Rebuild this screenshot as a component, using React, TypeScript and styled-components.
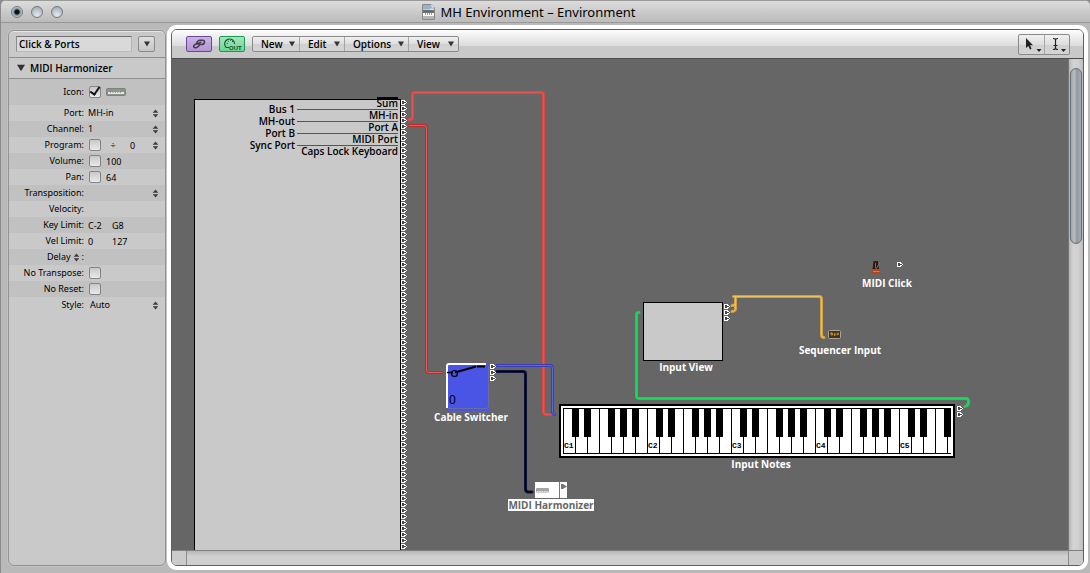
import React from "react";
import styled, { createGlobalStyle } from "styled-components";

const GlobalStyle = createGlobalStyle`
  * { box-sizing: border-box; }
  html, body { margin: 0; padding: 0; background: #8a8a8a; }
  body, button, input, select {
    font-family: "Noto Sans", "Open Sans", sans-serif;
    font-size: 10px;
    line-height: 12px;
    color: #000;
  }
`;

const strong = `
  font-family: "Open Sans", "Noto Sans", sans-serif;
  font-weight: 600;
`;

const Window = styled.div`
  display: flex;
  flex-direction: column;
  min-height: 100vh;
  background: #b9b9b9;
  border-left: 1px solid #8c8c8c;
  border-radius: 6px 6px 0 0;
  overflow: hidden;
`;

const TitleBar = styled.header`
  position: relative;
  display: flex;
  align-items: center;
  justify-content: center;
  gap: 6px;
  height: 23px;
  padding-right: 34px;
  border-top: 1px solid #9a9a9a;
  border-bottom: 1px solid #989898;
  background: linear-gradient(#dcdcdc, #bbbbbb);
`;

const Title = styled.h1`
  margin: 0;
  font-size: 13px;
  line-height: 18px;
  font-weight: 400;
`;

const Lights = styled.div`
  position: absolute;
  left: 10px;
  top: 5px;
  display: flex;
  gap: 8px;
`;

const Light = styled.button<{ $dot?: boolean }>`
  width: 12px;
  height: 12px;
  padding: 0;
  border: 1px solid #727a82;
  border-radius: 50%;
  background: ${(p) =>
    p.$dot
      ? "radial-gradient(circle at 50% 50%, #111 0 2px, #77818c 3px, #c5ced6 5px)"
      : "radial-gradient(circle at 50% 80%, #e4ebf0, #98a3ad)"};
`;

const Body = styled.main`
  flex: 1;
  display: flex;
  gap: 1px;
  padding: 2px 2px 3px 7px;
`;

const Sidebar = styled.aside`
  flex: none;
  width: 158px;
  margin: 5px 0 4px;
  border: 1px solid #939393;
  border-radius: 6px;
  background: #c9c9c9;
  box-shadow: inset 0 1px #e6e6e6, 0 0 0 1px #c2c2c2;
`;

const LayerBar = styled.div`
  display: flex;
  align-items: center;
  justify-content: space-between;
  height: 27px;
  padding: 0 10px 0 7px;
  border-bottom: 1px solid #8f8f8f;
`;

const LayerInput = styled.input`
  width: 116px;
  height: 16px;
  padding: 0 2px;
  border: 1px solid;
  border-color: #6f6f6f #b5b5b5 #bcbcbc #8c8c8c;
  background: #d9d9d9;
  outline: none;
  ${strong}
`;

const LayerButton = styled.button`
  display: grid;
  place-items: center;
  width: 17px;
  height: 16px;
  padding: 0;
  border: 1px solid #8a8a8a;
  border-radius: 2px;
  background: linear-gradient(#dedede, #c6c6c6);
`;

const SectionTitle = styled.button`
  display: flex;
  align-items: center;
  gap: 5px;
  width: 100%;
  height: 21px;
  padding: 0 8px;
  border: 0;
  border-bottom: 1px solid #8f8f8f;
  background: none;
  ${strong}
`;

const Row = styled.div<{ $shade?: boolean; $tall?: boolean }>`
  display: flex;
  align-items: center;
  gap: 4px;
  height: ${(p) => (p.$tall ? 26 : 16)}px;
  padding-right: 6px;
  background: ${(p) => (p.$shade ? "#c1c1c1" : "#c9c9c9")};
  font-size: 9px;
`;

const RowLabel = styled.label`
  display: flex;
  align-items: center;
  justify-content: flex-end;
  gap: 2px;
  flex: none;
  width: 75px;
  white-space: nowrap;
`;

const Select = styled.select<{ $inset?: boolean }>`
  flex: 1;
  min-width: 0;
  height: 14px;
  padding: 0 0 0 ${(p) => (p.$inset ? 2 : 0)}px;
  border: 0;
  appearance: none;
  background: none;
  font-size: 9px;
`;

const Field = styled.input<{ $w?: number }>`
  flex: none;
  width: ${(p) => p.$w ?? 50}px;
  height: 14px;
  padding: 0;
  border: 0;
  background: none;
  font-size: 9px;
  outline: none;
`;

const Spacer = styled.span`
  flex: 1;
`;

const Sign = styled.span`
  flex: none;
  width: 14px;
  margin-right: 6px;
  text-align: center;
`;

const Check = styled.input.attrs({ type: "checkbox" })`
  appearance: none;
  display: grid;
  place-items: center;
  flex: none;
  width: 12px;
  height: 12px;
  margin: 0 1px;
  border: 1px solid #858585;
  border-radius: 2px;
  background: linear-gradient(#c8c8c8, #e9e9e9);
  &:checked::after {
    content: "";
    width: 4px;
    height: 8px;
    border: solid #111;
    border-width: 0 2px 2px 0;
    transform: translateY(-2px) rotate(35deg);
  }
`;

const Frame = styled.section`
  flex: 1;
  min-width: 0;
  display: flex;
  border: 4px solid #fff;
  border-radius: 9px;
  background: #fff;
`;

const Pane = styled.div`
  flex: 1;
  min-width: 0;
  display: flex;
  flex-direction: column;
  border: 1px solid #5f5f5f;
  border-radius: 6px;
  overflow: hidden;
`;

const Toolbar = styled.div`
  display: flex;
  align-items: center;
  gap: 7px;
  height: 29px;
  padding: 0 13px 0 14px;
  border-bottom: 1px solid #4c4c4c;
  background: linear-gradient(#fdfdfd, #dcdcdc 56%, #c9c9c9 57%, #c9c9c9);
`;

const ModeButton = styled.button<{ $tone: "purple" | "green" }>`
  display: grid;
  place-items: center;
  width: 26px;
  height: 16px;
  padding: 0;
  border: 1px solid ${(p) => (p.$tone === "purple" ? "#6a46a0" : "#1a9a50")};
  border-radius: 2px;
  background: ${(p) =>
    p.$tone === "purple"
      ? "linear-gradient(#c9b4e2, #b296d4)"
      : "linear-gradient(#a5e6bd, #6bd594)"};
`;

const ButtonGroup = styled.div`
  display: flex;
  border: 1px solid #8a8a8a;
  border-radius: 2px;
  background: linear-gradient(#f0f0f0, #dedede 50%, #d0d0d0 51%, #d4d4d4);
`;

const MenuButton = styled.button<{ $w: number }>`
  display: flex;
  align-items: center;
  justify-content: space-between;
  width: ${(p) => p.$w}px;
  height: 14px;
  padding: 0 4px 0 8px;
  border: 0;
  background: none;
  ${strong}
  & + & { border-left: 1px solid #a5a5a5; }
`;

const ToolButton = styled.button`
  width: 25px;
  height: 19px;
  padding: 0;
  border: 0;
  background: none;
  & + & { border-left: 1px solid #a5a5a5; }
  svg { display: block; }
`;

const Work = styled.div`
  flex: 1;
  display: flex;
`;

const Canvas = styled.div`
  position: relative;
  flex: 1;
  min-width: 0;
  min-height: 480px;
  background: #666;
  overflow: hidden;
`;

const Cables = styled.svg`
  position: absolute;
  left: 0;
  top: 0;
  width: 100%;
  height: 100%;
`;

const Node = styled.div<{ $x: number; $y: number; $w: number }>`
  position: absolute;
  left: ${(p) => p.$x}px;
  top: ${(p) => p.$y}px;
  width: ${(p) => p.$w}px;
  display: flex;
  flex-direction: column;
  align-items: center;
  svg { display: block; }
`;

const NodeLabel = styled.span<{ $selected?: boolean }>`
  ${strong}
  font-weight: 700;
  font-size: 10px;
  line-height: 12px;
  white-space: nowrap;
  color: ${(p) => (p.$selected ? "#666" : "#fff")};
  background: ${(p) => (p.$selected ? "#fff" : "none")};
`;

const PortBox = styled.div`
  position: absolute;
  left: 22px;
  top: 40px;
  bottom: 0;
  display: grid;
  align-content: start;
  width: 207px;
  border: 1px solid #000;
  border-bottom: 0;
  padding-right: 2px;
  background: #c9c9c9;
  ${strong}
`;

const PortStack = styled.div<{ $offset: number }>`
  grid-area: 1 / 1;
  display: flex;
  flex-direction: column;
  align-items: flex-end;
  margin-top: ${(p) => p.$offset}px;
`;

const PortName = styled.span<{ $bar?: boolean }>`
  line-height: 12px;
  box-shadow: ${(p) => (p.$bar ? "inset 0 3px #000" : "none")};
`;

const InPort = styled.span`
  display: grid;
  grid-template-columns: 100px 1fr;
  align-items: center;
  gap: 2px;
  width: 100%;
  height: 12px;
  text-align: right;
  &::after { content: ""; height: 1px; background: #555; }
`;

const VTrack = styled.div`
  flex: none;
  width: 15px;
  padding: 9px 0 6px;
  border-left: 1px solid #777;
  background: linear-gradient(90deg, #b5b5b5, #d4d4d4 30%, #cfcfcf 70%, #bdbdbd);
`;

const VThumb = styled.div`
  height: 37%;
  margin: 0 1px;
  border: 1px solid #666c73;
  border-radius: 7px;
  background: linear-gradient(90deg, #a4a9ae, #b6babd 35%, #8f979f 60%, #a9afb5);
`;

const HTrack = styled.div`
  display: grid;
  grid-template-columns: 15px 1fr 15px;
  height: 15px;
  border-top: 1px solid #808080;
  background: linear-gradient(#b6b6b6, #d0d0d0 40%, #cfcfcf);
`;

const HCell = styled.div<{ $line?: "left" | "right" }>`
  border: 0 solid #8a8a8a;
  border-left-width: ${(p) => (p.$line === "left" ? 1 : 0)}px;
  border-right-width: ${(p) => (p.$line === "right" ? 1 : 0)}px;
  background: ${(p) => (p.$line ? "#cbcbcb" : "none")};
`;

const StepperIcon = styled.svg`
  flex: none;
`;

const Stepper = () => (
  <StepperIcon width="7" height="9" viewBox="0 0 7 9" fill="#3c3c3c">
    <path d="M3.5 0.5 6.3 3.7H0.7ZM3.5 8.5 6.3 5.3H0.7Z" />
  </StepperIcon>
);

const Caret = ({ size = 6 }: { size?: number }) => (
  <svg width={size} height={size} viewBox="0 0 6 6" fill="#333">
    <path d="M0 0.5H6L3 5.5Z" />
  </svg>
);

const Device = () => (
  <svg width="20" height="8" viewBox="0 0 20 8">
    <rect x="0.5" y="0.5" width="19" height="7" rx="1" fill="#8d928d" stroke="#808080" />
    <rect x="2" y="4" width="16" height="2" fill="#e6e6e6" />
    <path d="M4.5 4v1M7 4v1M9.500 4v1M12 4v1M14.500 4v1" stroke="#777" strokeWidth=".7" />
    <rect x="11" y="2" width="3" height="1" fill="#7fae7f" />
  </svg>
);

const Jack = ({ x, y }: { x: number; y: number }) => (
  <g shapeRendering="crispEdges">
    <path d={`M${x} ${y}h4v1h1v1h1v1h-1v1h-1v1h-4z`} fill="#fff" />
    <path d={`M${x + 1} ${y + 1}h2v1h2v1h-2v1h-2z`} fill="#484848" />
  </g>
);

const Cable = ({ d, edge, core }: { d: string; edge: string; core: string }) => (
  <g fill="none" strokeLinejoin="round" strokeLinecap="round">
    <path d={d} stroke={edge} strokeWidth="3" />
    <path d={d} stroke={core} strokeWidth="1" />
  </g>
);

const whiteKeys = Array.from({ length: 33 }, (_, i) => i);
const blackKeys = whiteKeys.filter((i) => [0, 1, 3, 4, 5].includes(i % 7) && i < 32);

const Keyboard = () => (
  <svg width="404" height="54" viewBox="0 0 404 54" shapeRendering="crispEdges">
    <rect width="396" height="54" fill="#000" />
    <rect x="2" y="2" width="392" height="50" fill="#fff" />
    <rect x="4" y="4" width="388" height="1" />
    <rect x="4" y="49" width="388" height="1" />
    {whiteKeys.map((i) => (
      <rect key={i} x={4 + i * 12} y="4" width="1" height="46" />
    ))}
    {blackKeys.map((i) => (
      <rect key={i} x={13 + i * 12} y="4" width="7" height="29" />
    ))}
    {[1, 2, 3, 4, 5].map((n) => (
      <text
        key={n}
        x={5 + (n - 1) * 84}
        y="44"
        fontFamily="Liberation Mono, monospace"
        fontSize="8"
        fontWeight="700"
      >
        {"C" + n}
      </text>
    ))}
  </svg>
);

const inPorts = ["Bus 1", "MH-out", "Port B", "Sync Port"];
const outPorts = ["Sum", "MH-in", "Port A", "MIDI Port", "Caps Lock Keyboard"];

export default function App() {
  return (
    <>
      <GlobalStyle />
      <Window>
        <TitleBar>
          <Lights>
            <Light $dot aria-label="Close" />
            <Light aria-label="Minimize" />
            <Light aria-label="Zoom" />
          </Lights>
          <svg width="13" height="16" viewBox="0 0 13 16">
            <path d="M0.500 0.500H9L12.500 4V15.500H0.500Z" fill="#e4e6e8" stroke="#888" />
            <path d="M1 1H8.500V5.500H1Z" fill="#8fb4cc" />
            <path d="M9 0.500V4H12.500" fill="#fff" stroke="#999" />
            <rect x="1" y="6" width="11" height="3" fill="#6d6d6d" />
            <rect x="1" y="9" width="11" height="4" fill="#fafafa" />
            <path d="M3.500 9v2M5.500 9v2M7.500 9v2M9.500 9v2" stroke="#888" strokeWidth=".8" />
            <rect x="1" y="12" width="11" height="3" fill="#b5b5b5" />
          </svg>
          <Title>MH Environment – Environment</Title>
        </TitleBar>
        <Body>
          <Sidebar>
            <LayerBar>
              <LayerInput aria-label="Layer" defaultValue="Click & Ports" />
              <LayerButton aria-label="Choose layer">
                <Caret />
              </LayerButton>
            </LayerBar>
            <SectionTitle>
              <Caret size={8} />
              MIDI Harmonizer
            </SectionTitle>
            <Row $tall $shade>
              <RowLabel htmlFor="icon">Icon:</RowLabel>
              <Check id="icon" defaultChecked />
              <Device />
            </Row>
            <Row>
              <RowLabel htmlFor="port">Port:</RowLabel>
              <Select id="port"><option>MH-in</option></Select>
              <Stepper />
            </Row>
            <Row $shade>
              <RowLabel htmlFor="channel">Channel:</RowLabel>
              <Select id="channel"><option>1</option></Select>
              <Stepper />
            </Row>
            <Row>
              <RowLabel htmlFor="program">Program:</RowLabel>
              <Check id="program" />
              <Sign>÷</Sign>
              <Field aria-label="Program number" $w={14} defaultValue="0" />
              <Spacer />
              <Stepper />
            </Row>
            <Row $shade>
              <RowLabel htmlFor="volume">Volume:</RowLabel>
              <Check id="volume" />
              <Field aria-label="Volume value" $w={40} defaultValue="100" />
            </Row>
            <Row>
              <RowLabel htmlFor="pan">Pan:</RowLabel>
              <Check id="pan" />
              <Field aria-label="Pan value" $w={40} defaultValue="64" />
            </Row>
            <Row $shade>
              <RowLabel htmlFor="transposition">Transposition:</RowLabel>
              <Field id="transposition" />
              <Spacer />
              <Stepper />
            </Row>
            <Row>
              <RowLabel htmlFor="velocity">Velocity:</RowLabel>
              <Field id="velocity" />
            </Row>
            <Row $shade>
              <RowLabel htmlFor="keylow">Key Limit:</RowLabel>
              <Field id="keylow" $w={20} defaultValue="C-2" />
              <Field aria-label="Key limit high" $w={30} defaultValue="G8" />
            </Row>
            <Row>
              <RowLabel htmlFor="vellow">Vel Limit:</RowLabel>
              <Field id="vellow" $w={20} defaultValue="0" />
              <Field aria-label="Velocity limit high" $w={30} defaultValue="127" />
            </Row>
            <Row $shade>
              <RowLabel htmlFor="delay">Delay <Stepper /> :</RowLabel>
              <Field id="delay" />
            </Row>
            <Row>
              <RowLabel htmlFor="notranspose">No Transpose:</RowLabel>
              <Check id="notranspose" />
            </Row>
            <Row $shade>
              <RowLabel htmlFor="noreset">No Reset:</RowLabel>
              <Check id="noreset" />
            </Row>
            <Row>
              <RowLabel htmlFor="style">Style:</RowLabel>
              <Select id="style" $inset><option>Auto</option></Select>
              <Stepper />
            </Row>
          </Sidebar>
          <Frame>
            <Pane>
              <Toolbar>
                <ModeButton $tone="purple" aria-label="Link">
                  <svg width="16" height="12" viewBox="0 0 16 12" fill="none" stroke="#453a52" strokeWidth="1.500">
                    <ellipse cx="5.500" cy="7.600" rx="3" ry="1.700" transform="rotate(-30 5.500 7.600)" />
                    <path d="M6.500 6.500L5.800 5Q6.500 2.500 9 2.300H11.500Q14 2.600 13.500 4.500Q13 6.500 10.500 6.500H9.500Q8 6.500 8.500 5Q9 4.300 10.500 4.300" />
                  </svg>
                </ModeButton>
                <ModeButton $tone="green" aria-label="MIDI out">
                  <svg width="20" height="14" viewBox="0 0 20 14">
                    <path d="M4 10.500A5 5 0 1 1 12.600 7" fill="none" stroke="#1c5a36" strokeWidth="1.200" />
                    <path d="M4.800 6.500h1M5.800 4.200h1M8 3.200h1M10 4.400h1M4 10.500h3" stroke="#1c5a36" strokeWidth="1.100" />
                    <text x="7" y="13" fontFamily="Liberation Sans, sans-serif" fontSize="6" fontWeight="700" fill="#17492c">OUT</text>
                  </svg>
                </ModeButton>
                <ButtonGroup>
                  <MenuButton $w={46}>New <Caret /></MenuButton>
                  <MenuButton $w={45}>Edit <Caret /></MenuButton>
                  <MenuButton $w={64}>Options <Caret /></MenuButton>
                  <MenuButton $w={50}>View <Caret /></MenuButton>
                </ButtonGroup>
                <Spacer />
                <ButtonGroup>
                  <ToolButton aria-label="Pointer tool">
                    <svg width="25" height="19" viewBox="0 0 25 19" fill="#222">
                      <path d="M7 3V13L9.300 10.900L11 14.500L12.600 13.800L11 10.300H14Z" />
                      <path d="M17.500 14h5l-2.500 3z" />
                    </svg>
                  </ToolButton>
                  <ToolButton aria-label="Text tool">
                    <svg width="25" height="19" viewBox="0 0 25 19" fill="#222">
                      <path d="M8 3.500Q10.500 3.500 10.500 5V13Q10.500 14.500 8 14.500M13 3.500Q10.500 3.500 10.500 5M10.500 13Q10.500 14.500 13 14.500M8.500 10.500H12.500" fill="none" stroke="#222" strokeWidth="1.200" />
                      <path d="M16 14h5l-2.500 3z" />
                    </svg>
                  </ToolButton>
                </ButtonGroup>
              </Toolbar>
              <Work>
                <Canvas>
                  <PortBox>
                    <PortStack $offset={3}>
                      {inPorts.map((p) => <InPort key={p}>{p}</InPort>)}
                    </PortStack>
                    <PortStack $offset={-3}>
                      {outPorts.map((p, i) => <PortName key={p} $bar={i === 0}>{p}</PortName>)}
                    </PortStack>
                  </PortBox>
                  <Node $x={387} $y={345} $w={404}>
                    <Keyboard />
                    <NodeLabel>Input Notes</NodeLabel>
                  </Node>
                  <Node $x={471} $y={243} $w={86}>
                    <svg width="86" height="59">
                      <rect x="0.500" y="0.500" width="79" height="58" fill="#c9c9c9" stroke="#000" />
                    </svg>
                    <NodeLabel>Input View</NodeLabel>
                  </Node>
                  <Node $x={274} $y={304} $w={50}>
                    <svg width="50" height="48" viewBox="446 363 50 48">
                      <rect x="447" y="364" width="42" height="47" fill="#4a55e6" />
                      <path d="M447 408V366Q447 364 449 364H486" fill="none" stroke="#fff" strokeWidth="2" />
                      <path d="M448 408.500H486Q488.500 408.500 488.500 406V366" fill="none" stroke="#696ca0" />
                      <path d="M447 372.500H453" stroke="#000" strokeWidth="1.500" />
                      <circle cx="454.500" cy="373.500" r="3" fill="none" stroke="#000" strokeWidth="1.200" />
                      <path d="M455 372.500L476 366.500M477 366.500H485" stroke="#000" strokeWidth="2" />
                      <text x="449" y="404" fontFamily="Noto Sans, sans-serif" fontSize="12">0</text>
                    </svg>
                    <NodeLabel>Cable Switcher</NodeLabel>
                  </Node>
                  <Node $x={363} $y={423} $w={32}>
                    <svg width="32" height="17" viewBox="0 0 32 17">
                      <rect width="32" height="16" fill="#fff" />
                      <rect x="24" width="1" height="16" fill="#777" />
                      <rect x="1" y="6" width="13" height="4.500" rx="1" fill="#a5a5a5" />
                      <path d="M2 9.500h11" stroke="#e8e8e8" strokeDasharray="1.500 .8" />
                      <path d="M26 2h2l4 2.500l-4 2.500h-2z" fill="#777" />
                    </svg>
                    <NodeLabel $selected>MIDI Harmonizer</NodeLabel>
                  </Node>
                  <Node $x={691} $y={201} $w={48}>
                    <svg width="48" height="17" viewBox="863 260 48 17">
                      <path d="M873.500 261h4.500l1 8h-6.500z" fill="#2c1c18" />
                      <path d="M872.500 269h7l1 5h-9z" fill="#b8431c" />
                      <path d="M873 271.500h6.500" stroke="#e07a3c" />
                      <path d="M876 269L880 262.500" stroke="#9a8074" strokeWidth=".8" />
                      <path d="M875.500 263v5" stroke="#b06a48" strokeWidth=".8" />
                    </svg>
                    <NodeLabel>MIDI Click</NodeLabel>
                  </Node>
                  <Node $x={656} $y={271} $w={24}>
                    <svg width="24" height="14" viewBox="828 330 24 14">
                      <rect x="828.500" y="330.500" width="12" height="8" rx="1" fill="#4a3416" stroke="#a5a5a5" />
                      <path d="M830 333q2-1.500 3 .5t-2 2zM834 333h1.500v3h-1.500zM836.500 333.500l2-1l.5 2l-2 1z" fill="#b9862f" />
                    </svg>
                    <NodeLabel>Sequencer Input</NodeLabel>
                  </Node>
                  <Cables>
                    <g transform="translate(-172 -59)">
                      <Cable edge="#de4646" core="#ee5050" d="M409 119.500H410Q412.500 119.500 412.500 117V95Q412.500 92.500 415 92.500H541Q543.500 92.500 543.500 95V412Q543.500 414.500 546 414.500H553" />
                      <Cable edge="#b92c2c" core="#ee5a5a" d="M409 125.500H424Q426.500 125.500 426.500 128V370Q426.500 372.500 429 372.500H442" />
                      <Cable edge="#3a3fb4" core="#5d64e6" d="M497 365.500H550Q552.500 365.500 552.500 368V412Q552.500 414.500 555 414.500" />
                      <Cable edge="#11133a" core="#000010" d="M497 371.500H523Q525.500 371.500 525.500 374V489Q525.500 491.500 528 492H532" />
                      <Cable edge="#2fc25c" core="#0fe05a" d="M965 406.500Q968.500 406 968.500 402V401Q968.500 398.500 966 398.500H639Q636.500 398.500 636.500 396V315Q636.500 312.500 639 312.500" />
                      <Cable edge="#cf9f43" core="#f0c25c" d="M732 305.500Q735.500 305.500 735.500 303V296.500M732 311.500Q736 311.500 735.500 307V303M733.500 296.500H819Q821.500 296.500 821.500 299V335Q821.500 337.500 824 337.500" />
                      {Array.from({ length: 75 }, (_, i) => (
                        <Jack key={i} x={401} y={100 + i * 6} />
                      ))}
                      {[304, 310, 316].map((y) => <Jack key={y} x={724} y={y} />)}
                      {[364, 370, 376].map((y) => <Jack key={y} x={490} y={y} />)}
                      {[406, 412].map((y) => <Jack key={y} x={957} y={y} />)}
                      <Jack x={897} y={262} />
                    </g>
                  </Cables>
                </Canvas>
                <VTrack>
                  <VThumb />
                </VTrack>
              </Work>
              <HTrack>
                <HCell $line="right" />
                <HCell />
                <HCell $line="left" />
              </HTrack>
            </Pane>
          </Frame>
        </Body>
      </Window>
    </>
  );
}
